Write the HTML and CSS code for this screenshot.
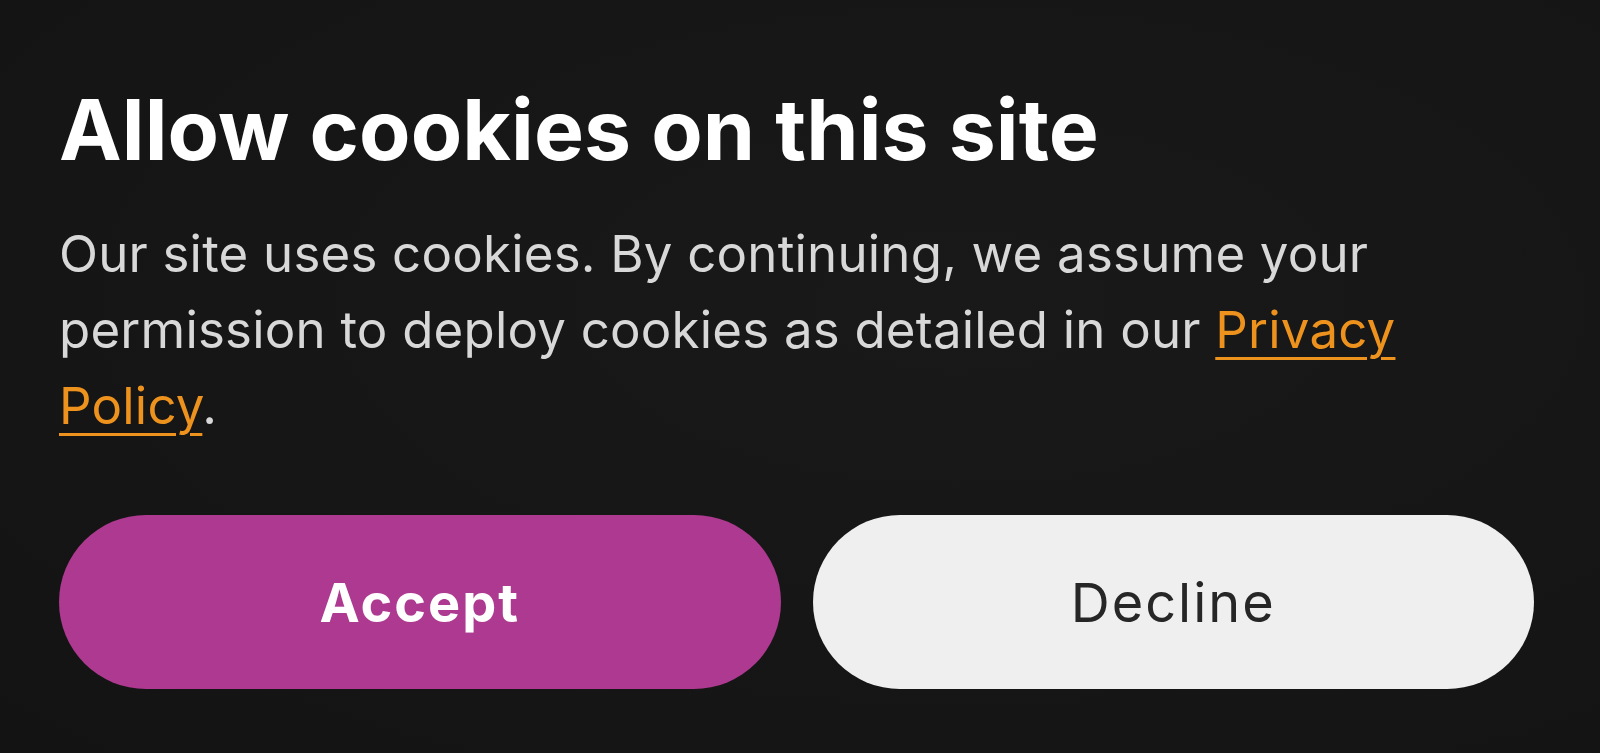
FILE: index.html
```html
<!DOCTYPE html>
<html lang="en">
<head>
<meta charset="utf-8">
<title>Allow cookies</title>
<link rel="stylesheet" href="styles.css">
</head>
<body>
<main class="banner">
  <h1 class="title">Allow cookies on this site</h1>
  <p class="text">Our site uses cookies. By continuing, we assume your permission to deploy cookies as detailed in our <a class="link" href="#">Privacy Policy</a>.</p>
  <div class="actions">
    <button class="btn btn-accept">Accept</button>
    <button class="btn btn-decline">Decline</button>
  </div>
</main>
</body>
</html>
```
FILE: styles.css
```css
html, body {
  margin: 0;
  height: 100%;
}
body {
  background: radial-gradient(ellipse at 60% 40%, #191919 0%, #151515 70%, #131313 100%);
  font-family: Inter, "Noto Sans", sans-serif;
  overflow: hidden;
}
.banner {
  padding: 78px 66px 0 59px;
  display: flex;
  flex-direction: column;
}
.title {
  margin: 0;
  font-size: 84px;
  line-height: 103px;
  font-weight: 700;
  color: #ffffff;
  letter-spacing: 0.1px;
}
.text {
  margin: 35px 0 0;
  font-size: 51px;
  line-height: 76px;
  font-weight: 400;
  color: #d8d8d8;
  letter-spacing: 0.2px;
}
.link {
  color: #ee921e;
  text-decoration: underline;
  text-decoration-thickness: 3px;
  text-underline-offset: 9px;
}
.actions {
  margin-top: 71px;
  display: flex;
  gap: 32px;
}
.btn {
  flex: 1;
  height: 174px;
  border: none;
  border-radius: 87px;
  font-family: Inter, "Noto Sans", sans-serif;
  font-size: 54px;
  letter-spacing: 2px;
  padding: 0;
}
.btn-accept {
  background: #ad3a90;
  color: #ffffff;
  font-weight: 700;
}
.btn-decline {
  background: #efefef;
  color: #262626;
  font-weight: 400;
}
```
